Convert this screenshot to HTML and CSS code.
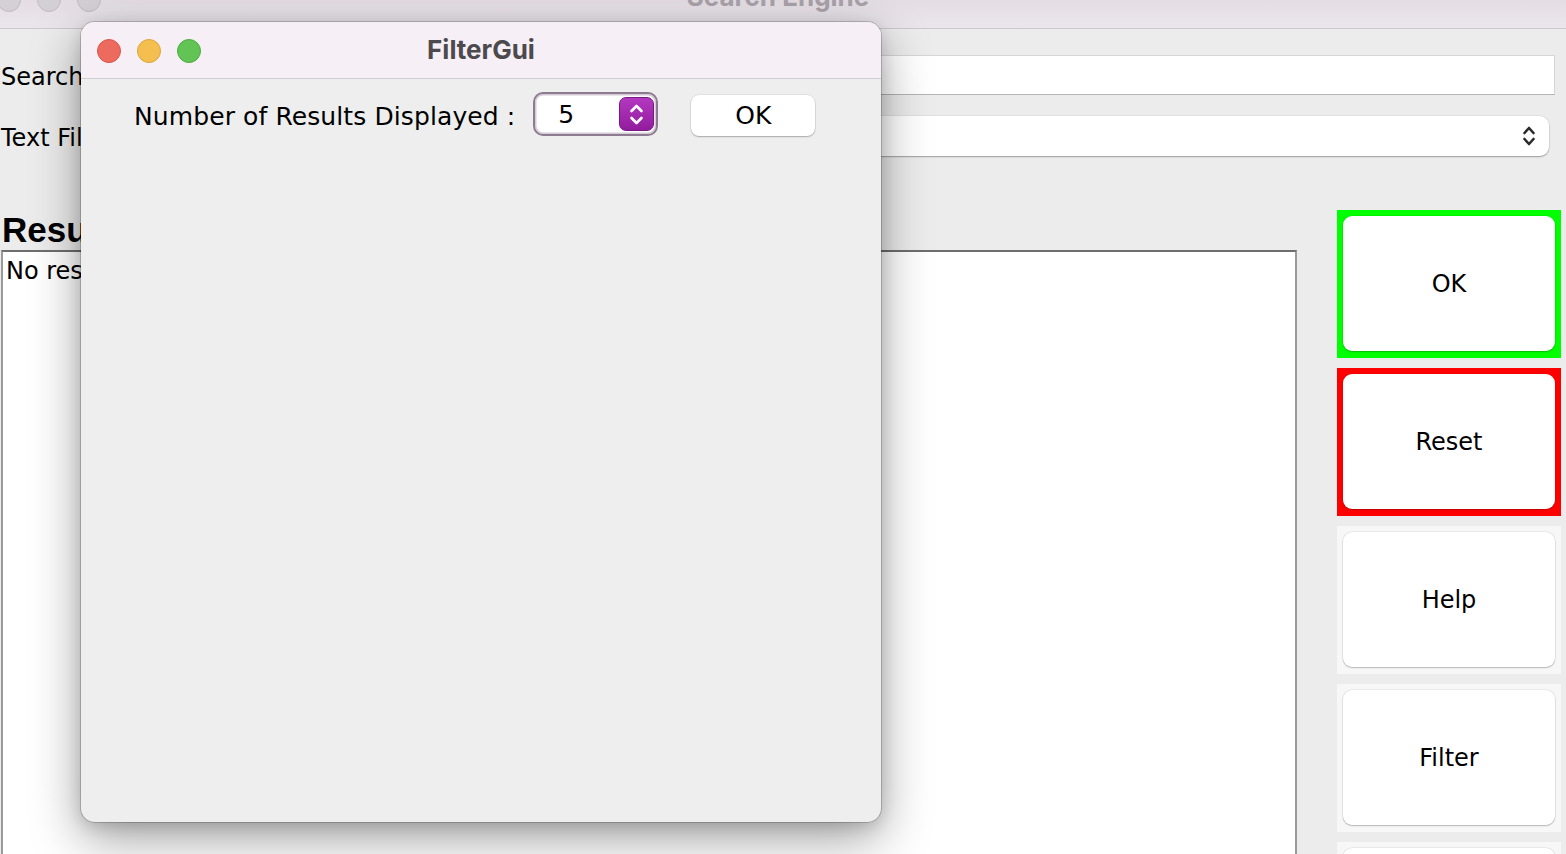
FILE: index.html
```html
<!DOCTYPE html>
<html lang="en">
<head>
<meta charset="utf-8">
<title>Search Engine</title>
<link rel="stylesheet" href="styles.css">
</head>
<body>
<div class="window">
  <div class="titlebar">
    <div class="lights">
      <span class="light gray"></span>
      <span class="light gray"></span>
      <span class="light gray"></span>
    </div>
    <div class="wtitle">Search Engine</div>
    <div></div>
  </div>
  <div class="content">
    <div class="form-row">
      <span class="flabel">Search</span>
      <div class="field"></div>
    </div>
    <div class="form-row">
      <span class="flabel">Text File</span>
      <div class="combo">
        <svg class="chev" width="14" height="22" viewBox="0 0 14 22"><path d="M2.5 8 L7 3 L11.5 8 M2.5 14 L7 19 L11.5 14" fill="none" stroke="#2b2b2b" stroke-width="2.6" stroke-linecap="round" stroke-linejoin="round"/></svg>
      </div>
    </div>
    <div class="lower">
      <div class="results">
        <h2 class="rhead">Results</h2>
        <div class="list">No results</div>
      </div>
      <div class="buttons">
        <div class="bwrap green"><div class="btn">OK</div></div>
        <div class="bwrap red"><div class="btn">Reset</div></div>
        <div class="bwrap plain"><div class="btn">Help</div></div>
        <div class="bwrap plain"><div class="btn">Filter</div></div>
        <div class="bwrap plain"><div class="btn"></div></div>
      </div>
    </div>
  </div>
</div>

<div class="dialog">
  <div class="dtitlebar">
    <div class="lights dl">
      <span class="light red-l"></span>
      <span class="light yellow-l"></span>
      <span class="light green-l"></span>
    </div>
    <div class="dtitle">FilterGui</div>
    <div></div>
  </div>
  <div class="dbody">
    <div class="drow">
      <span class="dlabel">Number of Results Displayed :</span>
      <div class="spinner">
        <span class="sval">5</span>
        <div class="stepper">
          <svg width="33" height="31" viewBox="0 0 33 31"><path d="M11.5 12 L16.5 7 L21.5 12 M11.5 19 L16.5 24 L21.5 19" fill="none" stroke="#ffffff" stroke-width="2.6" stroke-linecap="round" stroke-linejoin="round"/></svg>
        </div>
      </div>
      <div class="okbtn">OK</div>
    </div>
  </div>
</div>
</body>
</html>
```

FILE: styles.css
```css
* { box-sizing: border-box; }

html, body {
  margin: 0;
  padding: 0;
  width: 1566px;
  height: 854px;
  overflow: hidden;
  background: #ececec;
  font-family: "DejaVu Sans", "Open Sans", sans-serif;
  color: #000;
}

.window {
  width: 1566px;
  height: 854px;
  overflow: hidden;
  display: flex;
  flex-direction: column;
  background: #ececec;
}

.titlebar {
  height: 29px;
  flex: none;
  display: grid;
  grid-template-columns: 1fr auto 1fr;
  align-items: start;
  background: linear-gradient(#e4dee4, #ebe6eb);
  border-bottom: 1px solid #cdc8cd;
  overflow: hidden;
}

.lights {
  display: flex;
  gap: 16px;
}

.titlebar .lights {
  margin-top: -12px;
  margin-left: -3px;
}

.light {
  width: 24px;
  height: 24px;
  border-radius: 50%;
  display: block;
}

.light.gray {
  background: #d5d0d5;
  border: 1px solid #c2bcc2;
}

.wtitle {
  font-family: "Inter", "Liberation Sans", sans-serif;
  font-weight: 700;
  font-size: 26px;
  line-height: 26px;
  color: #aaa2aa;
  margin-top: -16px;
  margin-right: 10px;
}

.content {
  flex: 1;
  display: flex;
  flex-direction: column;
  padding: 26px 0 0 1px;
}

.form-row {
  display: grid;
  grid-template-columns: 150px 1fr;
  align-items: center;
  height: 40px;
  margin-bottom: 21px;
  font-size: 24px;
}

.flabel {
  padding-top: 3px;
}

.field {
  height: 40px;
  background: #fff;
  border: 1px solid #d6d6d6;
  border-bottom-color: #b4b4b4;
  margin-right: 11px;
}

.combo {
  height: 40px;
  background: #fff;
  border-radius: 9px;
  box-shadow: 0 1px 1.5px rgba(0,0,0,0.3), 0 0 0 0.5px rgba(0,0,0,0.08);
  margin-right: 17px;
  display: flex;
  align-items: center;
  justify-content: flex-end;
  padding-right: 13px;
}

.lower {
  margin-top: 33px;
  display: grid;
  grid-template-columns: 1296px 224px;
  column-gap: 40px;
  flex: 1;
}

.results {
  display: flex;
  flex-direction: column;
}

.rhead {
  margin: 0;
  font-family: "Liberation Sans", Arial, sans-serif;
  font-weight: 700;
  font-size: 35px;
  line-height: 40px;
  height: 40px;
  padding-left: 1px;
}

.list {
  flex: 1;
  background: #fff;
  border: 2px solid #9a9a9a;
  border-top-color: #6e6e6e;
  font-size: 24px;
  line-height: 28px;
  padding: 5px 3px;
}

.buttons {
  display: flex;
  flex-direction: column;
  gap: 10px;
}

.bwrap {
  height: 148px;
  flex: none;
  padding: 6px 6px 7px 6px;
  display: flex;
}

.bwrap.green { background: #00ff00; }
.bwrap.red { background: #ff0000; }
.bwrap.plain { background: #f7f7f7; }

.btn {
  flex: 1;
  background: #fff;
  border-radius: 9px;
  display: flex;
  align-items: center;
  justify-content: center;
  font-size: 24px;
  box-shadow: 0 1px 1.5px rgba(0,0,0,0.22), 0 0 0 0.5px rgba(0,0,0,0.1);
}

/* Dialog window floating above */
.dialog {
  position: absolute;
  left: 81px;
  top: 22px;
  width: 800px;
  height: 800px;
  border-radius: 14px;
  background: #eeeeee;
  overflow: hidden;
  box-shadow: 0 0 0 1px rgba(0,0,0,0.18), 0 16px 50px rgba(0,0,0,0.38), 0 4px 16px rgba(0,0,0,0.14);
  display: flex;
  flex-direction: column;
}

.dtitlebar {
  height: 57px;
  flex: none;
  background: #f6eff6;
  border-bottom: 1px solid #d2cdd2;
  display: grid;
  grid-template-columns: 1fr auto 1fr;
  align-items: center;
}

.dl {
  padding-left: 16px;
  margin-top: 2px;
}

.red-l { background: #ed6a5e; border: 1px solid #d8574b; }
.yellow-l { background: #f5bf4f; border: 1px solid #dca53c; }
.green-l { background: #61c454; border: 1px solid #4fab42; }

.dtitle {
  font-family: "Inter", "Liberation Sans", sans-serif;
  font-weight: 700;
  font-size: 26px;
  color: #4d4a4d;
  margin-top: -2px;
}

.dbody {
  flex: 1;
  padding: 13px 0 0 53px;
}

.drow {
  display: flex;
  align-items: center;
}

.dlabel {
  font-size: 25px;
  letter-spacing: 0.1px;
  margin-right: 18px;
  padding-top: 4px;
}

.spinner {
  width: 125px;
  height: 44px;
  border: 2px solid #8d7c91;
  border-radius: 10px;
  background: #fff;
  box-shadow: inset 0 0 0 1.5px #d4cbd6;
  display: flex;
  align-items: center;
  justify-content: space-between;
  padding: 0 2px 0 23px;
  margin-right: 33px;
}

.sval {
  font-size: 25px;
}

.stepper {
  width: 35px;
  height: 34px;
  border-radius: 7px;
  background: linear-gradient(#b338c1, #931c9e);
  border: 1px solid #7b1785;
  display: flex;
  align-items: center;
  justify-content: center;
}

.okbtn {
  width: 124px;
  height: 41px;
  background: #fff;
  border-radius: 8px;
  box-shadow: 0 1px 1.5px rgba(0,0,0,0.25), 0 0 0 0.5px rgba(0,0,0,0.1);
  display: flex;
  align-items: center;
  justify-content: center;
  font-size: 25px;
  margin-top: 2px;
}
```
